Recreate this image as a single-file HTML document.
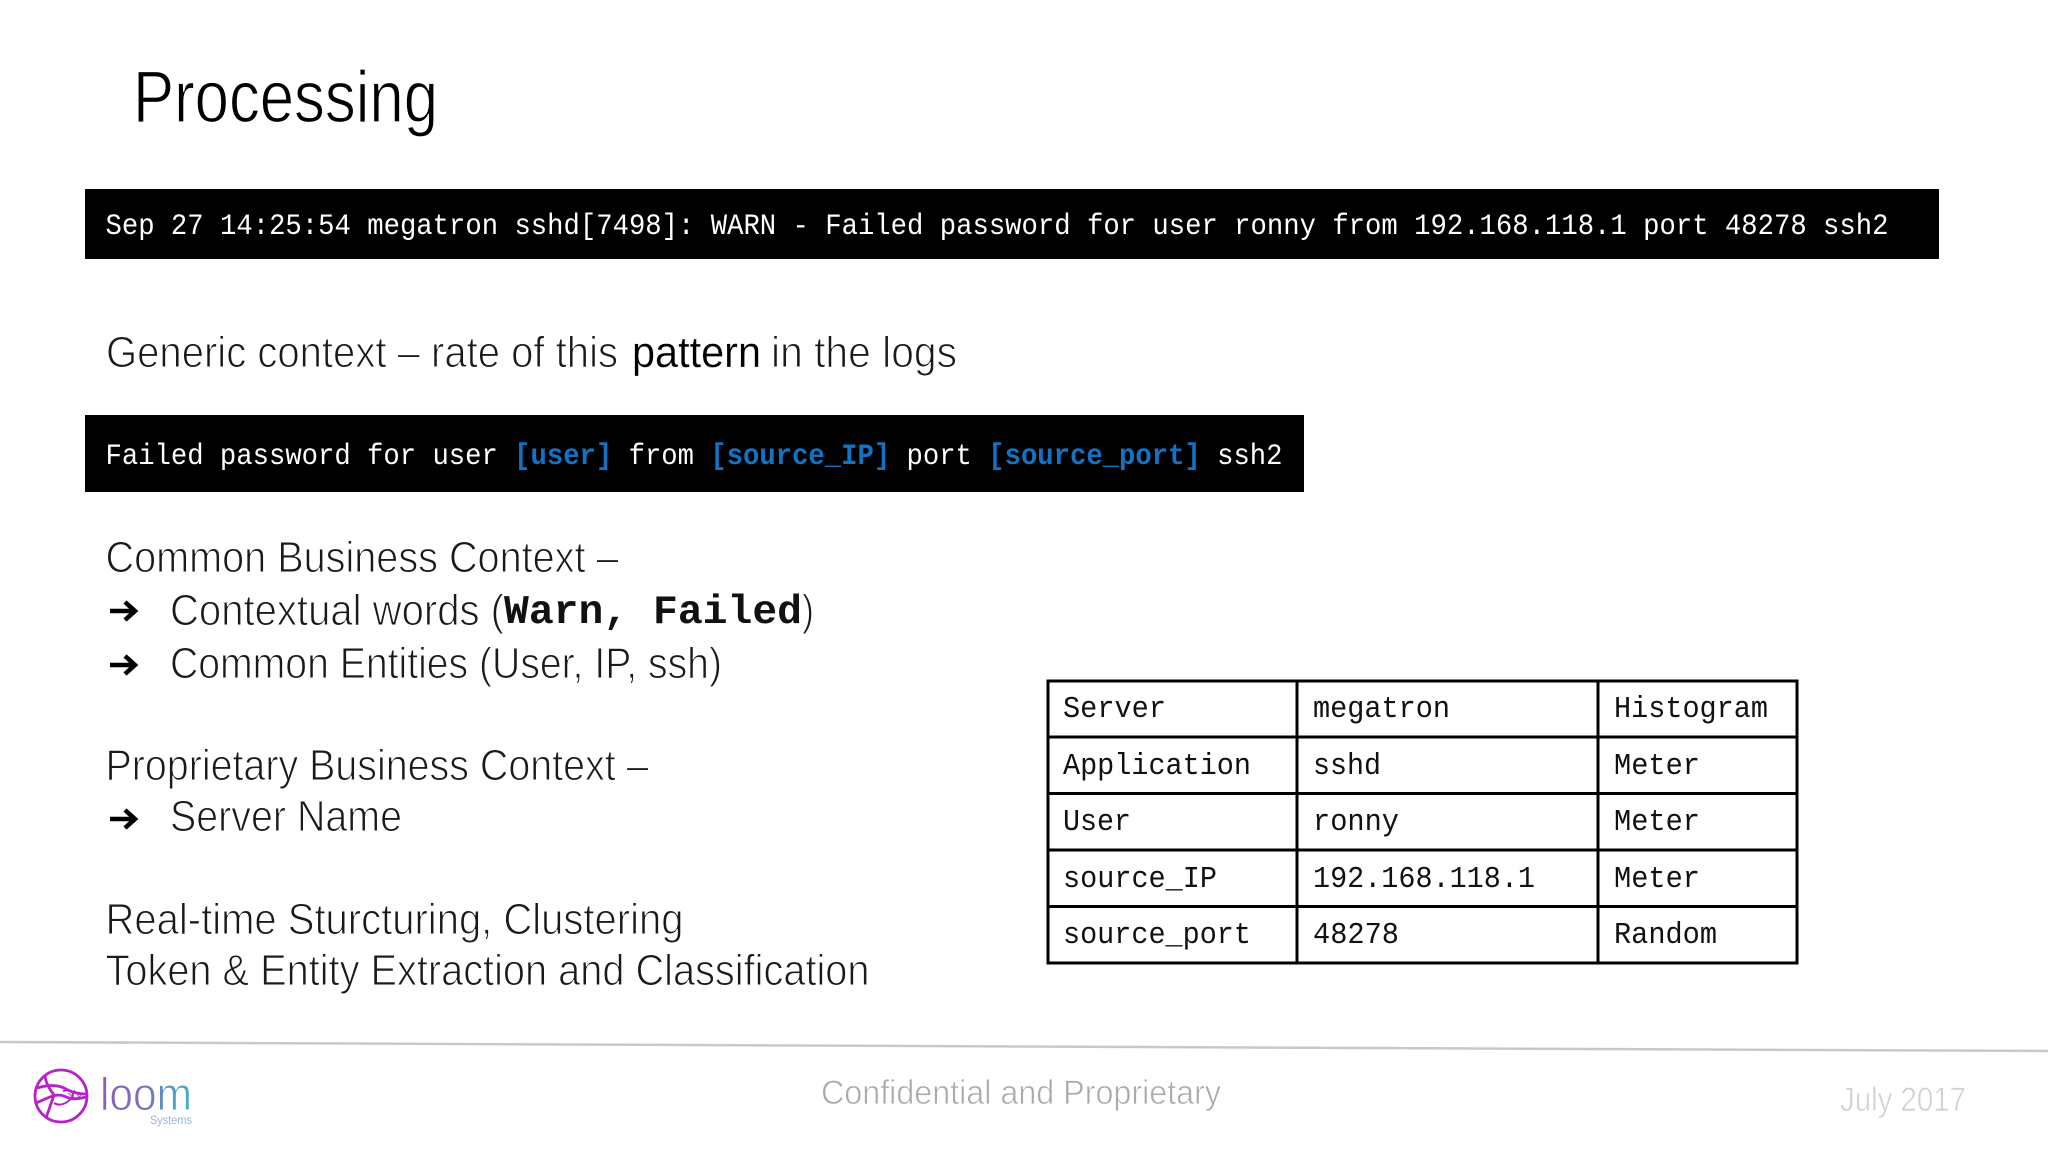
<!DOCTYPE html>
<html><head><meta charset="utf-8"><style>
html,body{margin:0;padding:0;background:#fff;width:2048px;height:1152px;overflow:hidden}
svg{display:block}
.l{font-family:"Liberation Sans",sans-serif;fill:#1a1a1a;stroke:#fff;stroke-width:1.1px;font-size:44px}
.p{stroke-width:.2px;fill:#000}
.m{font-family:"Liberation Mono",monospace;font-size:29.5px;fill:#fff;white-space:pre}
.t{font-family:"Liberation Mono",monospace;font-size:30.5px;fill:#111}
.b{fill:#1272c4;font-weight:bold}
</style></head><body>
<svg width="2048" height="1152" viewBox="0 0 2048 1152" xmlns="http://www.w3.org/2000/svg">
<defs><linearGradient id="g" x1="0" x2="1" y1="0" y2="0"><stop offset="0" stop-color="#8e5bb8"/><stop offset=".5" stop-color="#6f78c0"/><stop offset="1" stop-color="#3fb0cc"/></linearGradient></defs>
<rect width="2048" height="1152" fill="#fff"/>
<text class="l" x="133" y="122" style="font-size:73px;stroke-width:1.2px;fill:#000" textLength="305" lengthAdjust="spacingAndGlyphs">Processing</text>

<rect x="85" y="189" width="1854" height="70" fill="#000"/>
<text class="m" x="105.500" y="234" textLength="1783" lengthAdjust="spacingAndGlyphs">Sep 27 14:25:54 megatron sshd[7498]: WARN - Failed password for user ronny from 192.168.118.1 port 48278 ssh2</text>

<text class="l" x="106" y="367" textLength="512" lengthAdjust="spacingAndGlyphs">Generic context – rate of this</text>
<text class="l p" x="632" y="367" textLength="129" lengthAdjust="spacingAndGlyphs">pattern</text>
<text class="l" x="771" y="367" textLength="186" lengthAdjust="spacingAndGlyphs">in the logs</text>

<rect x="85" y="415" width="1219" height="77" fill="#000"/>
<text class="m" x="105.500" y="464" textLength="1177" lengthAdjust="spacingAndGlyphs">Failed password for user <tspan class="b">[user]</tspan> from <tspan class="b">[source_IP]</tspan> port <tspan class="b">[source_port]</tspan> ssh2</text>

<text class="l" x="105.500" y="572" textLength="513" lengthAdjust="spacingAndGlyphs">Common Business Context –</text>

<path d="M110 611H134M125 602L135 611L125 620" fill="none" stroke="#000" stroke-width="4.5"/>
<text class="l" x="170" y="625" textLength="334" lengthAdjust="spacingAndGlyphs">Contextual words (</text>
<text x="504" y="623" style="font-family:'Liberation Mono',monospace;font-size:41px;font-weight:bold;fill:#111" textLength="298" lengthAdjust="spacingAndGlyphs">Warn, Failed</text>
<text class="l" x="802" y="625" textLength="12" lengthAdjust="spacingAndGlyphs">)</text>

<path d="M110 665H134M125 656L135 665L125 674" fill="none" stroke="#000" stroke-width="4.5"/>
<text class="l" x="170" y="678" textLength="552" lengthAdjust="spacingAndGlyphs">Common Entities (User, IP, ssh)</text>

<text class="l" x="105.500" y="780" textLength="543" lengthAdjust="spacingAndGlyphs">Proprietary Business Context –</text>
<path d="M110 819H134M125 810L135 819L125 828" fill="none" stroke="#000" stroke-width="4.5"/>
<text class="l" x="170" y="831" textLength="232" lengthAdjust="spacingAndGlyphs">Server Name</text>

<text class="l" x="105.500" y="934" textLength="578" lengthAdjust="spacingAndGlyphs">Real-time Sturcturing, Clustering</text>
<text class="l" x="105.500" y="985" textLength="764" lengthAdjust="spacingAndGlyphs">Token &amp; Entity Extraction and Classification</text>

<g fill="none" stroke="#000" stroke-width="3">
<rect x="1048" y="681" width="749" height="282"/>
<path d="M1297 681V963M1598 681V963M1048 737H1797M1048 793.500H1797M1048 850H1797M1048 906.500H1797"/>
</g>
<text class="t" x="1063" y="717" textLength="103" lengthAdjust="spacingAndGlyphs">Server</text><text class="t" x="1313" y="717" textLength="137" lengthAdjust="spacingAndGlyphs">megatron</text><text class="t" x="1614" y="717" textLength="154" lengthAdjust="spacingAndGlyphs">Histogram</text>
<text class="t" x="1063" y="774" textLength="188" lengthAdjust="spacingAndGlyphs">Application</text><text class="t" x="1313" y="774" textLength="68" lengthAdjust="spacingAndGlyphs">sshd</text><text class="t" x="1614" y="774" textLength="86" lengthAdjust="spacingAndGlyphs">Meter</text>
<text class="t" x="1063" y="830" textLength="68" lengthAdjust="spacingAndGlyphs">User</text><text class="t" x="1313" y="830" textLength="86" lengthAdjust="spacingAndGlyphs">ronny</text><text class="t" x="1614" y="830" textLength="86" lengthAdjust="spacingAndGlyphs">Meter</text>
<text class="t" x="1063" y="887" textLength="154" lengthAdjust="spacingAndGlyphs">source_IP</text><text class="t" x="1313" y="887" textLength="222" lengthAdjust="spacingAndGlyphs">192.168.118.1</text><text class="t" x="1614" y="887" textLength="86" lengthAdjust="spacingAndGlyphs">Meter</text>
<text class="t" x="1063" y="943" textLength="188" lengthAdjust="spacingAndGlyphs">source_port</text><text class="t" x="1313" y="943" textLength="86" lengthAdjust="spacingAndGlyphs">48278</text><text class="t" x="1614" y="943" textLength="103" lengthAdjust="spacingAndGlyphs">Random</text>

<path d="M0 1042L2048 1051" stroke="#c8c8c8" stroke-width="2.500" fill="none"/>

<g fill="none" stroke="#b722c8" stroke-width="2.800">
<circle cx="61" cy="1096" r="26"/>
<path d="M37 1088C50 1084 60 1085 68 1090C74 1093 80 1094 86 1094"/>
<path d="M36 1103C48 1098 56 1093 64 1096C72 1100 78 1099 86 1097"/>
<path d="M45 1076C46 1084 50 1090 54 1095C51 1104 48 1112 46 1118"/>
<path d="M54 1103C60 1107 68 1103 72 1097C75 1092 70 1089 63 1091" stroke-width="2"/>
<path d="M68 1093L76 1099L84 1093M74 1090L80 1098" stroke-width="1.300" opacity=".7"/>
</g>
<text x="100" y="1110" style="font-family:'Liberation Sans',sans-serif;font-size:46px;stroke:#fff;stroke-width:.9px" fill="url(#g)" textLength="92" lengthAdjust="spacingAndGlyphs">loom</text>
<text x="150" y="1124" style="font-family:'Liberation Sans',sans-serif;font-size:12px;fill:#9bb4d4" textLength="42" lengthAdjust="spacingAndGlyphs">Systems</text>

<text x="821" y="1104" style="font-family:'Liberation Sans',sans-serif;font-size:34px;fill:#aaa;stroke:#fff;stroke-width:.7px" textLength="400" lengthAdjust="spacingAndGlyphs">Confidential and Proprietary</text>
<text x="1840" y="1111" style="font-family:'Liberation Sans',sans-serif;font-size:34px;fill:#d0d0d0;stroke:#fff;stroke-width:.7px" textLength="126" lengthAdjust="spacingAndGlyphs">July 2017</text>
</svg>
</body></html>
